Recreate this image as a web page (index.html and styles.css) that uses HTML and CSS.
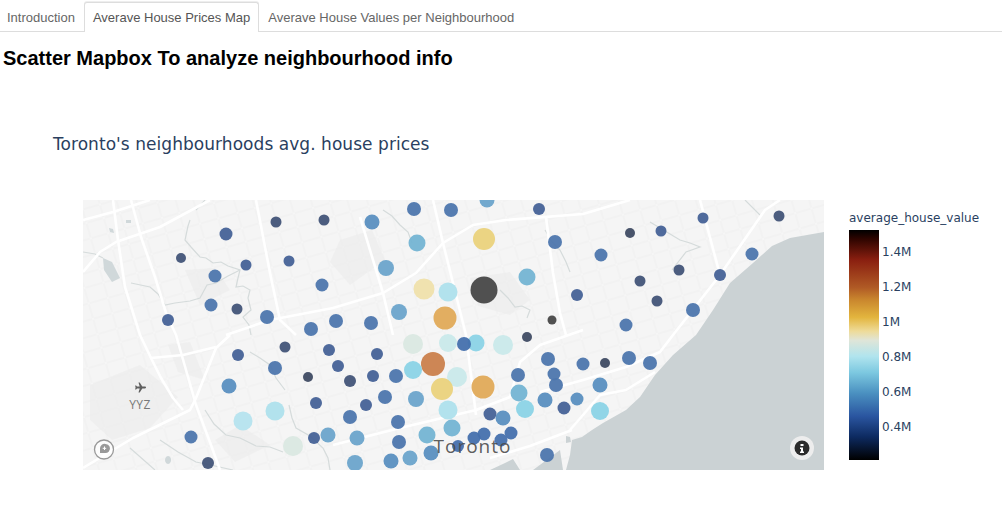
FILE: index.html
```html
<!DOCTYPE html>
<html lang="en">
<head>
<meta charset="utf-8">
<title>Scatter Mapbox</title>
<link rel="stylesheet" href="styles.css">
</head>
<body>
<nav class="tabs">
  <div class="tab first">Introduction</div>
  <div class="tab active">Averave House Prices Map</div>
  <div class="tab">Averave House Values per Neighbourhood</div>
</nav>
<h3 class="heading">Scatter Mapbox To analyze neighbourhood info</h3>
<section class="plot">
  <h4 class="plot-title">Toronto's neighbourhoods avg. house prices</h4>
  <div class="plot-row">
    <svg class="map" viewBox="83 200 741 270" width="741" height="270" xmlns="http://www.w3.org/2000/svg">
      <defs>
        <pattern id="gridA" width="74" height="62" patternUnits="userSpaceOnUse" patternTransform="rotate(-16 83 200)">
          <path class="g-case" d="M0 7H74M0 23H74M0 37H74M0 53H74M6 0V62M24 0V62M41 0V62M60 0V62"/>
          <path class="g-line" d="M0 7H74M0 23H74M0 37H74M0 53H74M6 0V62M24 0V62M41 0V62M60 0V62"/>
        </pattern>
      </defs>
      <rect class="land" x="83" y="200" width="741" height="270"/>
      <rect class="grid" x="83" y="200" width="741" height="270"/>
      <path class="patch" d="M90 385L140 365 178 397 150 428 112 440 90 420Z"/>
      <path class="patch" d="M470 278L510 272 530 300 510 315 478 306ZM340 240L372 230 385 260 350 285 330 262ZM185 270L215 268 230 290 200 305ZM168 345L190 342 205 380 178 372ZM215 440L240 425 270 445 235 462Z"/>
      <path class="water" d="M824 232L790 238 772 246 753 263 730 283 713 310 696 335 673 355 655 375 640 397 626 410 603 423 592 430 582 437 572 440 570 455 566 470H824Z"/>
      <path class="water" d="M490 470L505 463 513 459 520 470ZM533 470L552 456 560 450 563 470ZM566 436l4 1 1 5-5 1Z"/>
      <path class="pond" d="M103 258L112 262 120 278 112 282 104 270ZM126 220h5v3h-5ZM109 228l4 1 1 4-4-1ZM168 456a3 4 0 1 0 .1 0Z"/>
      <g class="creek">
        <path d="M190 220L188 226 185 240 191 247 200 257 206 258 213 263 221 262 228 266 240 270 238 278 236 287 243 286 250 290 248 298 251 310 243 317 249 325 251 335"/>
        <path d="M240 270L228 276 216 283 207 285 200 298 190 301 175 303 165 305 158 294 150 287 131 283"/>
        <path d="M83 252L95 254 103 258M205 200L196 210"/>
        <path d="M205 410L214 424 226 435 240 438 256 446 270 447 283 452M289 405L292 418 296 428 310 436 323 448 328 458 330 470"/>
        <path d="M383 210L392 216 400 225 408 232 412 243M500 290L508 298 515 307 522 306 530 310 527 318M545 230L552 242 560 250 566 262 570 272"/>
        <path d="M650 222L660 228 680 240 690 243 700 247 686 252 672 270M745 200L760 215"/>
        <path d="M250 352L260 358 270 365 276 378 285 390M130 448L155 470M160 440L178 452 196 462 215 466 233 470"/>
      </g>
      <g class="road">
        <path d="M83 272L100 252 116 242 160 227 210 200"/>
        <path d="M83 220L113 212 150 200"/>
        <path d="M113 200L118 240 125 287 140 335 151 358 161 378 173 398 183 410"/>
        <path d="M131 200L141 237 155 277 166 313 176 335 196 405 211 445 220 470"/>
        <path d="M230 335L216 348 196 398 190 410 133 438 83 468"/>
        <path d="M151 358L183 355 216 347"/>
        <path d="M226 335L270 320 333 308 383 293 416 273 443 243 473 225 506 220 583 214 630 200"/>
        <path d="M433 200L443 243 466 335 476 415"/>
        <path d="M546 217L553 273 560 313 566 335"/>
        <path d="M360 217L383 293 393 335"/>
        <path d="M256 200L270 273 280 320 296 335"/>
        <path d="M780 200L765 210 720 275 673 335 660 352 626 367 583 380 540 392"/>
        <path d="M700 200L720 275"/>
        <path d="M655 372L626 390 600 395 583 415 570 430"/>
        <path d="M333 445L400 428 476 410 510 397 520 362 540 345 583 330"/>
        <path d="M490 458L530 446 572 430"/>
      </g>
      <g class="markers">
        <circle class="n" cx="226" cy="234" r="6.5"/><circle class="k" cx="276" cy="222" r="5.5"/><circle class="k" cx="324" cy="220" r="5.5"/>
        <circle class="k" cx="181" cy="258" r="5"/><circle class="n" cx="246" cy="265" r="5.5"/><circle class="n" cx="289" cy="261" r="5.5"/>
        <circle class="b" cx="215" cy="276" r="6.5"/><circle class="b" cx="322" cy="285" r="6.5"/><circle class="b" cx="211" cy="305" r="6.5"/>
        <circle class="k" cx="237" cy="309" r="5.5"/><circle class="n" cx="168" cy="320" r="6"/><circle class="b" cx="267" cy="317" r="7"/>
        <circle class="b" cx="311" cy="329" r="7"/><circle class="b" cx="336" cy="321" r="7"/>
        <circle class="n" cx="238" cy="355" r="6"/><circle class="k" cx="285" cy="347" r="5.5"/><circle class="n" cx="329" cy="350" r="6"/>
        <circle class="b" cx="275" cy="368" r="7"/><circle class="d" cx="308" cy="377" r="5"/><circle class="m" cx="229" cy="386" r="7.5"/>
        <circle class="n" cx="316" cy="403" r="6"/><circle class="l" cx="275" cy="411" r="9.5"/><circle class="l2" cx="243" cy="421" r="9.5"/>
        <circle class="n" cx="314" cy="438" r="6"/><circle class="s" cx="328" cy="435" r="7.5"/><circle class="g" cx="293" cy="446" r="10"/>
        <circle class="b" cx="191" cy="437" r="6.5"/><circle class="k" cx="208" cy="463" r="6"/>
        <circle class="b" cx="414" cy="209" r="7"/><circle class="b" cx="451" cy="210" r="7"/><circle class="s" cx="487" cy="200" r="7.5"/>
        <circle class="n" cx="539" cy="209" r="6"/><circle class="m" cx="372" cy="222" r="7.5"/><circle class="t" cx="417" cy="243" r="8.5"/>
        <circle class="y2" cx="484" cy="239" r="11"/><circle class="b" cx="555" cy="242" r="7"/><circle class="s" cx="386" cy="268" r="8"/>
        <circle class="t" cx="527" cy="277" r="8.5"/><circle class="y1" cx="424" cy="289" r="10.5"/><circle class="l" cx="448" cy="292" r="9.5"/>
        <circle class="x" cx="484" cy="290" r="13.5"/><circle class="n" cx="577" cy="295" r="6"/><circle class="s" cx="399" cy="312" r="8"/>
        <circle class="o" cx="445" cy="318" r="11.5"/><circle class="x" cx="552" cy="320" r="4.5"/><circle class="b" cx="371" cy="323" r="7"/>
        <circle class="g" cx="413" cy="344" r="10"/><circle class="p" cx="448" cy="343" r="9"/><circle class="c" cx="476" cy="343" r="8.5"/>
        <circle class="b2" cx="464" cy="344" r="7"/><circle class="p" cx="503" cy="345" r="10"/><circle class="d" cx="527" cy="337" r="5"/>
        <circle class="n" cx="377" cy="354" r="6"/><circle class="n" cx="338" cy="366" r="6"/><circle class="b" cx="548" cy="359" r="7"/>
        <circle class="r" cx="433" cy="364" r="12"/><circle class="c" cx="413" cy="370" r="9"/><circle class="b" cx="554" cy="374" r="6.5"/>
        <circle class="b" cx="583" cy="364" r="6.5"/><circle class="n" cx="373" cy="376" r="6"/><circle class="b" cx="396" cy="376" r="7"/>
        <circle class="p" cx="457" cy="377" r="10"/><circle class="k" cx="350" cy="381" r="6"/><circle class="b" cx="518" cy="375" r="7"/>
        <circle class="y2" cx="442" cy="389" r="11"/><circle class="o" cx="483" cy="387" r="11.5"/><circle class="b" cx="556" cy="385" r="7"/>
        <circle class="t" cx="519" cy="393" r="8.5"/><circle class="b" cx="385" cy="397" r="7"/><circle class="s" cx="416" cy="399" r="8"/>
        <circle class="m" cx="577" cy="399" r="6.5"/><circle class="m" cx="545" cy="400" r="7.5"/><circle class="n" cx="564" cy="408" r="6.5"/>
        <circle class="n" cx="366" cy="405" r="6"/><circle class="c" cx="525" cy="409" r="9"/><circle class="l" cx="448" cy="410" r="9.5"/>
        <circle class="n" cx="490" cy="414" r="6.5"/><circle class="m" cx="503" cy="418" r="7.5"/><circle class="b" cx="350" cy="417" r="7"/>
        <circle class="b" cx="398" cy="422" r="7"/><circle class="t" cx="452" cy="428" r="8.5"/><circle class="t" cx="427" cy="435" r="8.5"/>
        <circle class="b2" cx="484" cy="434" r="6.5"/><circle class="b2" cx="474" cy="438" r="6.5"/><circle class="b2" cx="511" cy="433" r="6.5"/>
        <circle class="b2" cx="501" cy="440" r="6.5"/><circle class="s" cx="357" cy="438" r="7.5"/><circle class="b" cx="399" cy="442" r="7"/>
        <circle class="b2" cx="458" cy="446" r="6"/><circle class="m" cx="431" cy="453" r="7.5"/><circle class="s" cx="410" cy="458" r="7.5"/>
        <circle class="m" cx="391" cy="461" r="7.5"/><circle class="s" cx="355" cy="463" r="8"/><circle class="b" cx="547" cy="455" r="7"/>
        <circle class="n" cx="703" cy="218" r="5.5"/><circle class="k" cx="779" cy="216" r="5.5"/><circle class="d" cx="630" cy="233" r="5"/>
        <circle class="n" cx="661" cy="231" r="5.5"/><circle class="b" cx="601" cy="255" r="6.5"/><circle class="b" cx="752" cy="254" r="6.5"/>
        <circle class="k" cx="679" cy="270" r="5.5"/><circle class="n" cx="720" cy="275" r="6"/><circle class="k" cx="640" cy="281" r="5.5"/>
        <circle class="k" cx="657" cy="301" r="5.5"/><circle class="b" cx="693" cy="310" r="7"/><circle class="b" cx="626" cy="325" r="6.5"/>
        <circle class="b" cx="629" cy="358" r="7"/><circle class="d" cx="605" cy="363" r="5"/><circle class="b" cx="650" cy="363" r="7"/>
        <circle class="m" cx="600" cy="385" r="7.5"/><circle class="c" cx="600" cy="411" r="9"/>
      </g>
      <text class="city" x="472.500" y="453" text-anchor="middle">Toronto</text>
      <path class="plane" d="M146 387.500c0-.5-.5-.9-1.200-.9h-2.500l-2.600-4.100h-1.200l1.200 4.100h-2.700l-.9-1.100h-1l.5 2-.5 2h1l.9-1.100h2.700l-1.200 4.100h1.200l2.600-4.100h2.500c.7 0 1.200-.4 1.200-.9Z"/>
      <text class="airport" x="140" y="408.500" text-anchor="middle">YYZ</text>
      <g class="logo">
        <circle class="logo-ring" cx="104" cy="449.500" r="9.500"/>
        <path class="logo-pin" d="M105.500 444a4.500 4.500 0 0 1 3.200 7.700 4.500 4.500 0 0 1-3.200 1.300h-5.500v-5a4.500 4.500 0 0 1 5.500-4Z"/>
        <path class="logo-plus" d="M104.500 446.500v3.500M102.700 448.300h3.500"/>
      </g>
      <circle class="info-halo" cx="802" cy="448" r="12"/>
      <circle class="info-dot" cx="802" cy="448" r="7.500"/>
      <path class="info-i" d="M800.500 444h3v2h-3ZM800 447.500h3v4h1v1.500h-4v-1.500h1v-2.500h-1Z"/>
    </svg>
    <aside class="legend">
      <div class="legend-title">average_house_value</div>
      <div class="legend-body">
        <div class="legend-bar"></div>
        <ul class="ticks">
          <li>1.4M</li><li>1.2M</li><li>1M</li><li>0.8M</li><li>0.6M</li><li>0.4M</li>
        </ul>
      </div>
    </aside>
  </div>
</section>
</body>
</html>
```
FILE: styles.css
```css
* { box-sizing: border-box; }
html, body { margin: 0; padding: 0; background: #fff; }
body { width: 1002px; height: 509px; overflow: hidden; font-family: "Liberation Sans", Arial, sans-serif; }

.tabs { display: flex; height: 32px; border-bottom: 1px solid #ddd; padding-top: 2px; }
.tab { padding: 0 8px; font-size: 13px; line-height: 29px; color: #666; border: 1px solid transparent; border-bottom: 0; }
.tab.first { padding: 0 7px 0 6px; }
.tab.active { color: #555; border-color: #ddd; border-radius: 3px 3px 0 0; background: #fff; height: 30px; margin-left: 1px; box-shadow: 0 -1px 0 #eee; }

.heading { margin: 15px 0 0 3px; font-size: 20px; line-height: 23px; font-weight: 700; color: #000; }

.plot { padding-top: 63px; }
.plot-title { margin: 0 0 0 53px; font: 400 17px/22px "DejaVu Sans", sans-serif; letter-spacing: .05px; color: #2a3f5f; }
.plot-row { display: flex; margin: 45px 0 0 83px; }
.map { display: block; flex: none; }

.land { fill: #f5f5f5; }
.patch { fill: #e9e9e9; fill-opacity: .45; }
.grid { fill: url(#gridA); }
.g-case { fill: none; stroke: #e9e9e9; stroke-width: 2; }
.g-line { fill: none; stroke: #fbfbfb; stroke-width: 1; }
.water { fill: #cbd2d4; }
.pond { fill: #d0d8da; }
.creek path { fill: none; stroke: #d5dbdb; stroke-width: 1.200; }
.road path { fill: none; stroke: #fff; stroke-width: 2.600; stroke-linejoin: round; }

.markers circle { opacity: .95; }
.d { fill: #3f4b63; }
.x { fill: #474747; }
.k { fill: #425478; }
.n { fill: #466297; }
.b { fill: #4d76ad; }
.b2 { fill: #4470ad; opacity: .85; }
.m { fill: #5a8fc0; }
.s { fill: #6ca4cb; }
.t { fill: #74b4d3; }
.c { fill: #8bd3e6; }
.l { fill: #aee0ec; }
.l2 { fill: #b5e3ee; }
.p { fill: #c9e9ea; }
.g { fill: #dae8e1; }
.y1 { fill: #efe0ab; }
.y2 { fill: #ead27c; }
.o { fill: #e0aa58; }
.r { fill: #ca804c; }

.city { font: 400 19px "Open Sans", sans-serif; letter-spacing: 1px; fill: #4a4a4a; fill-opacity: .9; }
.airport { font: 400 12px "Open Sans", sans-serif; letter-spacing: .4px; fill: #777; }
.plane { fill: #5f5f5f; }
.logo-ring { fill: #fff; fill-opacity: .7; stroke: #999; stroke-width: 1.300; }
.logo-pin { fill: #999; }
.logo-plus { fill: none; stroke: #fff; stroke-width: 1; }
.info-halo { fill: #ededed; }
.info-dot { fill: #2b2b2b; }
.info-i { fill: #fff; }

.legend { margin-left: 25px; width: 153px; margin-top: 10px; }
.legend-title { font: 400 12px/16px "DejaVu Sans", sans-serif; color: #2a3f5f; white-space: nowrap; }
.legend-body { display: flex; margin-top: 4px; }
.legend-bar { width: 30px; height: 230px; background: linear-gradient(to bottom, #000 0%, #2f0500 4%, #8a1f10 13%, #b05a25 25%, #c8842d 30%, #e3b53e 38%, #eedb99 44%, #dfe5d8 48%, #b0e4ee 55%, #7cc8e0 62%, #4a90c0 71%, #2a55a0 81%, #0d2a60 90%, #000 100%); }
.ticks { list-style: none; margin: 0; padding: 5px 0 0 3px; font: 400 12px/34.900px "DejaVu Sans", sans-serif; color: #2a3f5f; }
```
